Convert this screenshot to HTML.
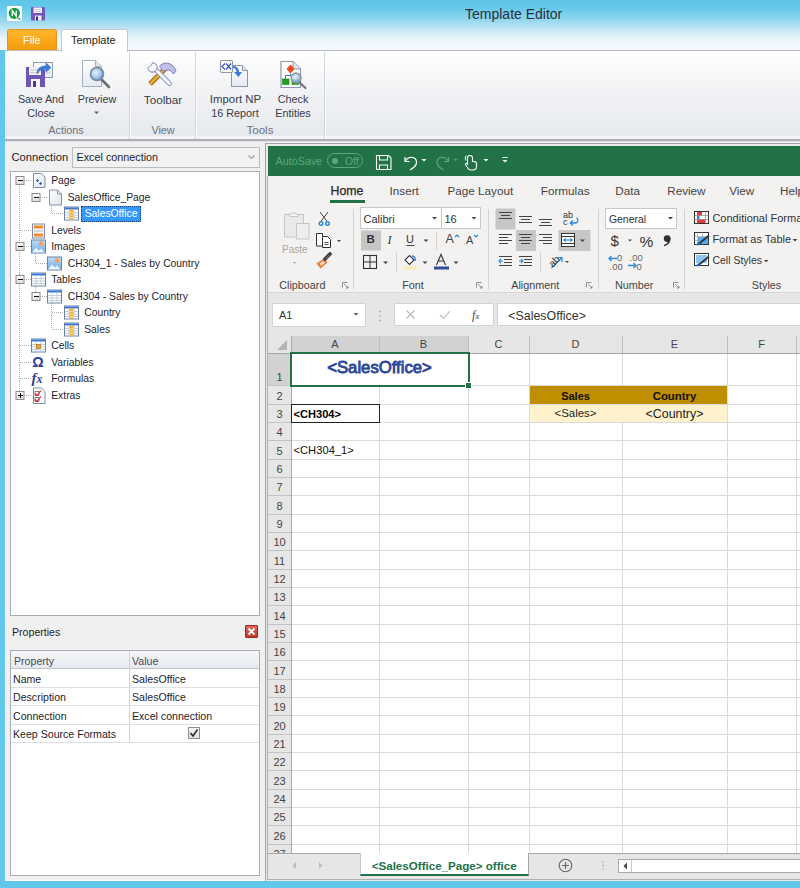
<!DOCTYPE html>
<html><head><meta charset="utf-8">
<style>
*{box-sizing:border-box;margin:0;padding:0}
html,body{width:800px;height:888px;overflow:hidden}
body{position:relative;background:#62c7ea;font-family:"Liberation Sans",sans-serif;color:#222}
.a{position:absolute}
.t{position:absolute;white-space:nowrap;line-height:1}
#title{left:0;top:0;width:800px;height:50px;background:linear-gradient(#5cc6e8 0%,#66c9ea 16%,#8fd5ef 38%,#bce5f4 56%,#dcf0f9 70%,#edf6fb 80%,#f5f9fd 100%)}
#ribbon{left:5px;top:50px;width:795px;height:91px;background:linear-gradient(#ffffff 0%,#f3f4f6 40%,#e6e9ed 97%,#f2f4f8 97%);border-top:1px solid #b9bcc2;border-bottom:2px solid #aeb0b4}
.sep{position:absolute;top:52px;width:1px;height:87px;background:#d2d5db;box-shadow:1px 0 0 #fdfdfe}
.rl{font-size:10.8px;color:#3a3a48;text-align:center}
.gl{font-size:10.8px;color:#6b7080;text-align:center}
#left{left:5px;top:141px;width:795px;height:740px;background:#f0f0f0;border-top:1px solid #e2e2e2;border-left:1px solid #fdfbfb;border-bottom:1px solid #fdfbfb}
#xl{left:265px;top:143px;width:535px;height:738px;background:#f0f0f0;border-left:1px solid #a4a4a4;border-top:1px solid #a4a4a4}
.tree{font-size:11px;color:#1b1b2b}

.ui{font-size:10.6px;color:#1e1e2c}
.tr{font-size:10.35px}
</style></head><body>
<div id="title" class="a"></div>
<div class="t" style="left:465px;top:7px;font-size:14px;color:#2a2f3a">Template Editor</div>

<!-- qlik icon -->
<svg class="a" style="left:0;top:0" width="50" height="25" viewBox="0 0 50 25">
 <rect x="7" y="6" width="15" height="15" rx="1.5" fill="#fff"/>
 <path d="M19 17.5 L21 20 L17.5 19 Z" fill="#0e9a3e"/>
 <circle cx="14.3" cy="13.3" r="5.6" fill="#0e9a3e"/>
 <path d="M12.3 16.2 V10.6 L16.3 16.2 V10.6" fill="none" stroke="#e8f6ec" stroke-width="1.5"/>
 <rect x="31" y="7" width="14" height="13.5" rx="0.8" fill="#7257b8"/>
 <rect x="33.5" y="7.5" width="8.5" height="5.5" fill="#f4f4fa"/>
 <path d="M34.5 9.5 h6.5 M34.5 11.5 h6.5" stroke="#b8b8c8" stroke-width="0.7"/>
 <rect x="35" y="15.5" width="6.5" height="5" fill="#f0eef8"/>
 <rect x="36" y="16.5" width="2" height="4" fill="#3a2a78"/>
</svg>
<!-- tabs -->
<div class="a" style="left:7px;top:29px;width:50px;height:22px;border-radius:3px 3px 0 0;background:linear-gradient(#ffb62c,#fba81a 50%,#f39a0a);border:1px solid #e8951c;border-bottom:none"></div>
<div class="t" style="left:23px;top:35px;font-size:11px;color:#fff">File</div>
<div class="a" style="left:61px;top:29px;width:67px;height:23px;border-radius:3px 3px 0 0;background:#fff;border:1px solid #c6cad0;border-bottom:none;z-index:2"></div>
<div class="t" style="left:71px;top:35px;font-size:11px;color:#222;z-index:3">Template</div>

<div id="ribbon" class="a"></div>
<div class="sep" style="left:129px"></div>
<div class="sep" style="left:195px"></div>
<div class="sep" style="left:324px"></div>

<div class="t rl" style="left:10px;top:94px;width:62px">Save And</div>
<div class="t rl" style="left:10px;top:108px;width:62px">Close</div>
<div class="t rl" style="left:66px;top:94px;width:62px">Preview</div>
<div class="t gl" style="left:35px;top:125px;width:62px">Actions</div>
<svg class="a" style="left:93px;top:111px" width="8" height="4"><path d="M1 0.5 h5 l-2.5 2.5 z" fill="#5a5a66"/></svg>
<div class="t rl" style="left:132px;top:93.6px;width:62px;font-size:11.7px">Toolbar</div>
<div class="t gl" style="left:132px;top:125px;width:62px">View</div>
<div class="t rl" style="left:200.5px;top:93.8px;width:70px;font-size:11.4px">Import NP</div>
<div class="t rl" style="left:200px;top:108px;width:70px">16 Report</div>
<div class="t rl" style="left:262px;top:94px;width:62px">Check</div>
<div class="t rl" style="left:262px;top:108px;width:62px">Entities</div>
<div class="t gl" style="left:229px;top:125px;width:62px;font-size:11.5px">Tools</div>


<!-- ribbon icons -->
<svg class="a" style="left:0;top:0;z-index:5" width="330" height="95" viewBox="0 0 330 95">
 <defs>
  <linearGradient id="docg" x1="0" y1="0" x2="0" y2="1"><stop offset="0" stop-color="#ffffff"/><stop offset="1" stop-color="#e4e9f2"/></linearGradient>
  <radialGradient id="lens" cx="0.4" cy="0.4" r="0.6"><stop offset="0" stop-color="#e8f2fb"/><stop offset="0.6" stop-color="#a9c9ea"/><stop offset="1" stop-color="#6f9bd0"/></radialGradient>
 </defs>
 <!-- save and close -->
 <rect x="33.5" y="62.5" width="19" height="15" fill="url(#docg)" stroke="#8a9bb0"/>
 <line x1="42" y1="70" x2="50" y2="70" stroke="#b8c4d4"/><line x1="42" y1="73" x2="50" y2="73" stroke="#b8c4d4"/>
 <path d="M26 67 h16 l3 3 v17 h-19 z" fill="#6d56b8"/>
 <rect x="29" y="67" width="12" height="8" fill="#f0f0f4"/>
 <line x1="30" y1="70" x2="40" y2="70" stroke="#c8c8d0"/><line x1="30" y1="72.5" x2="40" y2="72.5" stroke="#c8c8d0"/>
 <rect x="31" y="79" width="9" height="8" fill="#f4f4f8"/><rect x="33" y="81" width="3" height="6" fill="#4a3a90"/>
 <path d="M37 74 C37 68 41 66 46 66 V63 L51 67.5 L46 72 V69 C42 69 39 70 37 74 Z" fill="#3b7fd4" stroke="#2a64b8" stroke-width="0.6"/>
 <!-- preview -->
 <path d="M82.5 60.5 h13 l6 6 v20 h-19 z" fill="url(#docg)" stroke="#a4b0c0"/>
 <path d="M95.5 60.5 v6 h6" fill="#e0e6ee" stroke="#a4b0c0"/>
 <line x1="101" y1="79" x2="109" y2="87" stroke="#6a6e76" stroke-width="2.6" stroke-linecap="round"/>
 <circle cx="97" cy="74" r="6.5" fill="url(#lens)" stroke="#7e8894" stroke-width="1.6"/>
 <!-- toolbar (tools) -->
 <path d="M150 84 L165.5 68.5" stroke="#94600a" stroke-width="5" stroke-linecap="butt"/>
 <path d="M150 84 L165.5 68.5" stroke="#e8ac30" stroke-width="3"/>
 <path d="M159.5 66.5 C162 62.5 168 62 172.5 65.5 L176 70.5 L173.5 74 L170.5 70.5 C168 69.5 165.5 70 163.5 71.5 Z" fill="#c4c0ea" stroke="#7d76c6" stroke-width="1"/>
 <path d="M156.5 70.5 L169.5 83.5" stroke="#8898c0" stroke-width="5" stroke-linecap="round"/>
 <path d="M156.5 70.5 L169.5 83.5" stroke="#f6f8fc" stroke-width="3" stroke-linecap="round"/>
 <circle cx="152.5" cy="67.5" r="4.6" fill="#f6f8fc" stroke="#8898c0" stroke-width="1.1"/>
 <path d="M146 63 L150.5 65 L152 67 L149.5 69 L147 67.5 Z M146 63 L153 61 L152.5 64 L150.5 65.5 Z" fill="#f8f9fa"/>
 <path d="M147.8 67.8 L150.3 66.3 L152 64 L152.6 62.2" fill="none" stroke="#8898c0" stroke-width="1"/>
 <!-- import NP -->
 <path d="M231.5 65.5 h11 l5 5 v16 h-16 z" fill="url(#docg)" stroke="#8a96a6"/>
 <path d="M242.5 65.5 v5 h5" fill="#dfe6ee" stroke="#8a96a6"/>
 <rect x="220.5" y="60.5" width="12" height="12" rx="1.5" fill="#fff" stroke="#8d98a6" stroke-width="1.2"/>
 <path d="M225 63.5 L222 66.5 L225 69.5 M226 63.5 L231 69.5 M231 63.5 L226 69.5" fill="none" stroke="#3c5cc0" stroke-width="1.3"/>
 <path d="M233 66 C237 66 239 69 239 72 H242 L238.5 77 L234 72 H236.5 C236.5 70 235 68 233 68 Z" fill="#3f78d8"/>
 <!-- check entities -->
 <path d="M281 61.5 h12 l7.5 7.5 v18.5 h-19.5 z" fill="#fff" stroke="#8a98aa" stroke-width="1.2"/>
 <path d="M293 61.5 v7.5 h7.5" fill="#dde6f0" stroke="#8a98aa"/>
 <path d="M290.5 64.5 L294.5 69 L290.5 73.5 L286.5 69 Z" fill="#ef4a1c"/>
 <path d="M290.5 73.5 V75.5 H285.5 V79 M290.5 75.5 H295" fill="none" stroke="#4a70a8" stroke-width="1"/>
 <rect x="282.5" y="79" width="6.5" height="5.5" fill="#1ea21e" stroke="#138013" stroke-width="0.6"/>
 <rect x="292" y="79" width="6.5" height="5.5" fill="#1ea21e" stroke="#138013" stroke-width="0.6"/>
 <line x1="299" y1="82" x2="305.5" y2="88" stroke="#70747c" stroke-width="2.2" stroke-linecap="round"/>
 <circle cx="296" cy="78" r="5" fill="url(#lens)" stroke="#8a929c" stroke-width="1.3" fill-opacity="0.85"/>
</svg>

<div id="left" class="a"></div>
<div class="t ui" style="left:11.5px;top:151.5px;font-size:11.2px">Connection</div>
<div class="a" style="left:72px;top:147px;width:188px;height:21px;background:#f2f2f2;border:1px solid #bcbcbc"></div>
<div class="t ui" style="left:76.5px;top:151.5px;font-size:10.8px">Excel connection</div>
<svg class="a" style="left:247px;top:154px" width="10" height="8"><path d="M1.5 1.5 L4.5 4.5 L7.5 1.5" fill="none" stroke="#a0a0a0" stroke-width="1.2"/></svg>
<div class="a" style="left:10px;top:171px;width:250px;height:445px;background:#fff;border:1px solid #a9acb2"></div>
<svg class="a" style="left:0;top:0" width="265" height="420" viewBox="0 0 265 420">
<defs><linearGradient id="expg" x1="0" y1="0" x2="0" y2="1"><stop offset="0" stop-color="#fff"/><stop offset="1" stop-color="#dcdcdc"/></linearGradient>
<linearGradient id="imgbg" x1="0" y1="0" x2="0" y2="1"><stop offset="0" stop-color="#bfe0fa"/><stop offset="1" stop-color="#6fa6e0"/></linearGradient>
<linearGradient id="pageg" x1="0" y1="0" x2="1" y2="1"><stop offset="0" stop-color="#fff"/><stop offset="1" stop-color="#dfe6ef"/></linearGradient></defs>
<line x1="19.5" y1="184" x2="19.5" y2="391" stroke="#acacac" stroke-dasharray="1 1"/>
<line x1="24" y1="180.5" x2="31" y2="180.5" stroke="#acacac" stroke-dasharray="1 1"/>
<line x1="20" y1="230.5" x2="31" y2="230.5" stroke="#acacac" stroke-dasharray="1 1"/>
<line x1="24" y1="246.5" x2="31" y2="246.5" stroke="#acacac" stroke-dasharray="1 1"/>
<line x1="24" y1="279.5" x2="31" y2="279.5" stroke="#acacac" stroke-dasharray="1 1"/>
<line x1="20" y1="345.5" x2="31" y2="345.5" stroke="#acacac" stroke-dasharray="1 1"/>
<line x1="20" y1="362.5" x2="31" y2="362.5" stroke="#acacac" stroke-dasharray="1 1"/>
<line x1="20" y1="378.5" x2="31" y2="378.5" stroke="#acacac" stroke-dasharray="1 1"/>
<line x1="24" y1="395.5" x2="31" y2="395.5" stroke="#acacac" stroke-dasharray="1 1"/>
<line x1="35.5" y1="194" x2="35.5" y2="193" stroke="#acacac" stroke-dasharray="1 1"/>
<line x1="35.5" y1="250" x2="35.5" y2="263" stroke="#acacac" stroke-dasharray="1 1"/>
<line x1="36" y1="263.5" x2="47" y2="263.5" stroke="#acacac" stroke-dasharray="1 1"/>
<line x1="35.5" y1="283" x2="35.5" y2="292" stroke="#acacac" stroke-dasharray="1 1"/>
<line x1="40" y1="197.5" x2="47" y2="197.5" stroke="#acacac" stroke-dasharray="1 1"/>
<line x1="40" y1="296.5" x2="47" y2="296.5" stroke="#acacac" stroke-dasharray="1 1"/>
<line x1="51.5" y1="204" x2="51.5" y2="213" stroke="#acacac" stroke-dasharray="1 1"/>
<line x1="52" y1="213.5" x2="63" y2="213.5" stroke="#acacac" stroke-dasharray="1 1"/>
<line x1="51.5" y1="303" x2="51.5" y2="329" stroke="#acacac" stroke-dasharray="1 1"/>
<line x1="52" y1="312.5" x2="63" y2="312.5" stroke="#acacac" stroke-dasharray="1 1"/>
<line x1="52" y1="329.5" x2="63" y2="329.5" stroke="#acacac" stroke-dasharray="1 1"/>
<rect x="16.0" y="176.5" width="8" height="8" fill="url(#expg)" stroke="#8c8c8c"/>
<line x1="18" y1="180.5" x2="23" y2="180.5" stroke="#111" stroke-width="1"/>
<path d="M33.5 173.5 h8 l3.5 3.5 v10.5 h-11.5 z" fill="url(#pageg)" stroke="#7d8ea6"/>
<path d="M36 180.5 h3 M37.5 179.0 v3 M39 183.5 h3 M40.5 182.0 v3" stroke="#3f5fb8" stroke-width="1.2"/>
<rect x="32.0" y="193.5" width="8" height="8" fill="url(#expg)" stroke="#8c8c8c"/>
<line x1="34" y1="197.5" x2="39" y2="197.5" stroke="#111" stroke-width="1"/>
<path d="M49.5 190.0 h8 l4 4 v11 h-12 z" fill="url(#pageg)" stroke="#8596ad"/>
<path d="M57.5 190.0 v4 h4" fill="none" stroke="#8596ad"/>
<rect x="64.5" y="207.0" width="14" height="13" fill="#fff" stroke="#6b82a8"/>
<rect x="65" y="207.5" width="13" height="2" fill="#3d78d8"/>
<line x1="65" y1="212.5" x2="78" y2="212.5" stroke="#c4cedc"/>
<line x1="65" y1="215.0" x2="78" y2="215.0" stroke="#c4cedc"/>
<line x1="65" y1="217.5" x2="78" y2="217.5" stroke="#c4cedc"/>
<line x1="69" y1="209.5" x2="69" y2="219.5" stroke="#c4cedc"/><line x1="74" y1="209.5" x2="74" y2="219.5" stroke="#c4cedc"/>
<rect x="69.5" y="209.5" width="4" height="10" fill="#f3b338"/>
<line x1="69.5" y1="212.5" x2="73.5" y2="212.5" stroke="#f9d98c"/>
<line x1="69.5" y1="215.0" x2="73.5" y2="215.0" stroke="#f9d98c"/>
<line x1="69.5" y1="217.5" x2="73.5" y2="217.5" stroke="#f9d98c"/>
<rect x="32.5" y="224.0" width="12" height="14" fill="#f4f6fa" stroke="#7d8ea6"/>
<rect x="34" y="225.5" width="9" height="3" fill="#f08a2a"/><rect x="34" y="233.5" width="9" height="3" fill="#f08a2a"/>
<line x1="34" y1="231.0" x2="43" y2="231.0" stroke="#a8b8d0"/>
<rect x="16.0" y="242.5" width="8" height="8" fill="url(#expg)" stroke="#8c8c8c"/>
<line x1="18" y1="246.5" x2="23" y2="246.5" stroke="#111" stroke-width="1"/>
<rect x="31.5" y="240.0" width="14" height="13" fill="url(#imgbg)" stroke="#6b82a8"/>
<circle cx="41" cy="243.5" r="2.2" fill="#f79a5a"/>
<path d="M32 252.5 L36 247.5 L39 250.5 L41 248.5 L45 252.5 z" fill="#eef4fc"/>
<rect x="47.5" y="257.0" width="14" height="13" fill="url(#imgbg)" stroke="#6b82a8"/>
<circle cx="57" cy="260.5" r="2.2" fill="#f79a5a"/>
<path d="M48 269.5 L52 264.5 L55 267.5 L57 265.5 L61 269.5 z" fill="#eef4fc"/>
<rect x="16.0" y="275.5" width="8" height="8" fill="url(#expg)" stroke="#8c8c8c"/>
<line x1="18" y1="279.5" x2="23" y2="279.5" stroke="#111" stroke-width="1"/>
<rect x="31.5" y="273.0" width="14" height="13" fill="#fff" stroke="#6b82a8"/>
<rect x="32" y="273.5" width="13" height="2" fill="#3d78d8"/>
<line x1="32" y1="278.5" x2="45" y2="278.5" stroke="#c4cedc"/>
<line x1="32" y1="281.0" x2="45" y2="281.0" stroke="#c4cedc"/>
<line x1="32" y1="283.5" x2="45" y2="283.5" stroke="#c4cedc"/>
<line x1="36" y1="275.5" x2="36" y2="285.5" stroke="#c4cedc"/><line x1="41" y1="275.5" x2="41" y2="285.5" stroke="#c4cedc"/>
<rect x="32.0" y="292.5" width="8" height="8" fill="url(#expg)" stroke="#8c8c8c"/>
<line x1="34" y1="296.5" x2="39" y2="296.5" stroke="#111" stroke-width="1"/>
<rect x="47.5" y="290.0" width="14" height="13" fill="#fff" stroke="#6b82a8"/>
<rect x="48" y="290.5" width="13" height="2" fill="#3d78d8"/>
<line x1="48" y1="295.5" x2="61" y2="295.5" stroke="#c4cedc"/>
<line x1="48" y1="298.0" x2="61" y2="298.0" stroke="#c4cedc"/>
<line x1="48" y1="300.5" x2="61" y2="300.5" stroke="#c4cedc"/>
<line x1="52" y1="292.5" x2="52" y2="302.5" stroke="#c4cedc"/><line x1="57" y1="292.5" x2="57" y2="302.5" stroke="#c4cedc"/>
<rect x="64.5" y="306.0" width="14" height="13" fill="#fff" stroke="#6b82a8"/>
<rect x="65" y="306.5" width="13" height="2" fill="#3d78d8"/>
<line x1="65" y1="311.5" x2="78" y2="311.5" stroke="#c4cedc"/>
<line x1="65" y1="314.0" x2="78" y2="314.0" stroke="#c4cedc"/>
<line x1="65" y1="316.5" x2="78" y2="316.5" stroke="#c4cedc"/>
<line x1="69" y1="308.5" x2="69" y2="318.5" stroke="#c4cedc"/><line x1="74" y1="308.5" x2="74" y2="318.5" stroke="#c4cedc"/>
<rect x="69.5" y="308.5" width="4" height="10" fill="#f3b338"/>
<line x1="69.5" y1="311.5" x2="73.5" y2="311.5" stroke="#f9d98c"/>
<line x1="69.5" y1="314.0" x2="73.5" y2="314.0" stroke="#f9d98c"/>
<line x1="69.5" y1="316.5" x2="73.5" y2="316.5" stroke="#f9d98c"/>
<rect x="64.5" y="323.0" width="14" height="13" fill="#fff" stroke="#6b82a8"/>
<rect x="65" y="323.5" width="13" height="2" fill="#3d78d8"/>
<line x1="65" y1="328.5" x2="78" y2="328.5" stroke="#c4cedc"/>
<line x1="65" y1="331.0" x2="78" y2="331.0" stroke="#c4cedc"/>
<line x1="65" y1="333.5" x2="78" y2="333.5" stroke="#c4cedc"/>
<line x1="69" y1="325.5" x2="69" y2="335.5" stroke="#c4cedc"/><line x1="74" y1="325.5" x2="74" y2="335.5" stroke="#c4cedc"/>
<rect x="69.5" y="325.5" width="4" height="10" fill="#f3b338"/>
<line x1="69.5" y1="328.5" x2="73.5" y2="328.5" stroke="#f9d98c"/>
<line x1="69.5" y1="331.0" x2="73.5" y2="331.0" stroke="#f9d98c"/>
<line x1="69.5" y1="333.5" x2="73.5" y2="333.5" stroke="#f9d98c"/>
<rect x="31.5" y="339.0" width="14" height="13" fill="#fff" stroke="#6b82a8"/>
<rect x="32" y="339.5" width="13" height="2" fill="#3d78d8"/>
<line x1="32" y1="344.5" x2="45" y2="344.5" stroke="#c4cedc"/>
<line x1="32" y1="347.0" x2="45" y2="347.0" stroke="#c4cedc"/>
<line x1="32" y1="349.5" x2="45" y2="349.5" stroke="#c4cedc"/>
<line x1="36" y1="341.5" x2="36" y2="351.5" stroke="#c4cedc"/><line x1="41" y1="341.5" x2="41" y2="351.5" stroke="#c4cedc"/>
<rect x="36.5" y="344.5" width="4" height="4" fill="#f1a51c" stroke="#9a6a10" stroke-width="0.6"/>
<rect x="16.0" y="391.5" width="8" height="8" fill="url(#expg)" stroke="#8c8c8c"/>
<line x1="18" y1="395.5" x2="23" y2="395.5" stroke="#111" stroke-width="1"/>
<line x1="20.5" y1="393.0" x2="20.5" y2="398.0" stroke="#111" stroke-width="1"/>
<path d="M33.5 388.0 h8 l3.5 3.5 v12 h-11.5 z" fill="#fff" stroke="#7d8ea6"/>
<rect x="35" y="391.5" width="4" height="4" fill="none" stroke="#555" stroke-width="0.7"/><rect x="35" y="397.5" width="4" height="4" fill="none" stroke="#555" stroke-width="0.7"/>
<path d="M35 393.5 l2 2 l4 -5 M35 399.5 l2 2 l4 -5" fill="none" stroke="#e02020" stroke-width="1.2"/>
</svg>
<div class="t ui tr" style="left:51.2px;top:175.5px">Page</div>
<div class="t ui tr" style="left:67.7px;top:192.5px">SalesOffice_Page</div>
<div class="a" style="left:81px;top:206.0px;width:60px;height:16px;background:#3399ff;border:1px dotted #1a3f7a"></div>
<div class="t ui tr" style="left:84.7px;top:208.5px;color:#fff">SalesOffice</div>
<div class="t ui tr" style="left:51.2px;top:225.5px">Levels</div>
<div class="t ui tr" style="left:51.2px;top:241.5px">Images</div>
<div class="t ui tr" style="left:67.7px;top:258.5px">CH304_1 - Sales by Country</div>
<div class="t ui tr" style="left:51.2px;top:274.5px">Tables</div>
<div class="t ui tr" style="left:67.7px;top:291.5px">CH304 - Sales by Country</div>
<div class="t ui tr" style="left:84.2px;top:307.5px">Country</div>
<div class="t ui tr" style="left:84.2px;top:324.5px">Sales</div>
<div class="t ui tr" style="left:51.2px;top:340.5px">Cells</div>
<div class="t" style="left:32.3px;top:355.2px;font-size:14.2px;font-weight:bold;color:#2a3f9e">&#937;</div>
<div class="t ui tr" style="left:51.2px;top:357.5px">Variables</div>
<div class="t" style="left:31.5px;top:370.5px;font-size:15px;font-weight:bold;font-style:italic;font-family:'Liberation Serif',serif;color:#2a3f9e">f<span style="font-size:12px">x</span></div>
<div class="t ui tr" style="left:51.2px;top:373.5px">Formulas</div>
<div class="t ui tr" style="left:51.2px;top:390.5px">Extras</div>
<div class="t ui" style="left:12px;top:627px">Properties</div>
<div class="a" style="left:245px;top:625px;width:13px;height:13px;background:linear-gradient(#e26a5a,#c0392b);border:1px solid #9a2a20;border-radius:1px"></div>
<svg class="a" style="left:245px;top:625px" width="13" height="13"><path d="M3.5 3.5 L9.5 9.5 M9.5 3.5 L3.5 9.5" stroke="#fff" stroke-width="1.8"/></svg>
<div class="a" style="left:10px;top:650px;width:250px;height:226px;background:#fff;border:1px solid #a9acb2"></div>
<div class="a" style="left:11px;top:651px;width:248px;height:18px;background:linear-gradient(#f5f6f8,#e6e9ee);border-bottom:1px solid #c0c4ca"></div>
<div class="a" style="left:129px;top:651px;width:1px;height:92px;background:#d0d4da"></div>
<div class="a" style="left:11px;top:687px;width:248px;height:1px;background:#dcdfe4"></div>
<div class="a" style="left:11px;top:705px;width:248px;height:1px;background:#dcdfe4"></div>
<div class="a" style="left:11px;top:724px;width:248px;height:1px;background:#dcdfe4"></div>
<div class="a" style="left:11px;top:742px;width:248px;height:1px;background:#dcdfe4"></div>
<div class="t ui" style="left:14px;top:656px;color:#4a4a5a">Property</div>
<div class="t ui" style="left:132px;top:656px;color:#4a4a5a">Value</div>
<div class="t ui" style="left:13px;top:674.0px">Name</div>
<div class="t ui" style="left:132px;top:674.0px">SalesOffice</div>
<div class="t ui" style="left:13px;top:692.3px">Description</div>
<div class="t ui" style="left:132px;top:692.3px">SalesOffice</div>
<div class="t ui" style="left:13px;top:710.6px">Connection</div>
<div class="t ui" style="left:132px;top:710.6px">Excel connection</div>
<div class="t ui" style="left:13px;top:728.9px">Keep Source Formats</div>
<div class="a" style="left:188px;top:727px;width:12px;height:12px;background:linear-gradient(#f4f4f4,#dedede);border:1px solid #8e8f8f"></div>
<svg class="a" style="left:188px;top:727px" width="12" height="12"><path d="M2.5 6 L5 9 L9.5 2.5" fill="none" stroke="#222" stroke-width="1.4"/></svg><div class="a" style="left:265px;top:143px;width:535px;height:738px;background:#e9e9e9;border-left:1px solid #a4a4a4;border-top:1px solid #a4a4a4"></div>
<div class="a" style="left:267px;top:176px;width:1px;height:704px;background:#b0b0b0"></div>
<div class="a" style="left:268px;top:146px;width:532px;height:30px;background:#217346"></div>
<div class="t" style="left:275.5px;top:156px;font-size:10.8px;color:#5ea67b">AutoSave</div>
<div class="a" style="left:327px;top:153px;width:36px;height:15px;border:1px solid #5ea67b;border-radius:8px"></div>
<div class="a" style="left:332px;top:157.5px;width:6px;height:6px;border-radius:50%;background:#5ea67b"></div>
<div class="t" style="left:345px;top:156px;font-size:10.5px;color:#5ea67b">Off</div>
<svg class="a" style="left:268px;top:146px" width="260" height="30" viewBox="268 146 260 30">
 <path d="M376.5 155.5 h12 l2.5 2.5 v11.5 h-14.5 z" fill="none" stroke="#fff" stroke-width="1.1"/>
 <path d="M379.5 155.5 v4.5 h8 v-4.5" fill="none" stroke="#fff" stroke-width="1.1"/>
 <path d="M379.5 169.5 v-4.5 h8 v4.5" fill="none" stroke="#fff" stroke-width="1.1"/>
 <path d="M405 157 v4.5 h4.5" fill="none" stroke="#fff" stroke-width="1.2"/>
 <path d="M405.5 161 C408 156 416 156 416.5 162 C417 166 413 168 410 170" fill="none" stroke="#fff" stroke-width="1.2"/>
 <path d="M421.5 159 h5 l-2.5 2.5 z" fill="#fff"/>
 <path d="M448.5 157 v4.5 h-4.5" fill="none" stroke="#5ea67b" stroke-width="1.2"/>
 <path d="M448 161 C445.5 156 437.5 156 437 162 C436.5 166 440.5 168 443.5 170" fill="none" stroke="#5ea67b" stroke-width="1.2"/>
 <path d="M453.5 159 h4 l-2 2 z" fill="#5ea67b"/>
 <path d="M467.5 164 v-6 a2.5 2.5 0 0 1 5 0 v3.5 h1.5 a2.5 2.5 0 0 1 2.5 2.5 v2.5 c0 2 -1.5 3.5 -3.5 3.5 h-2 c-1.5 0 -2.5 -0.8 -3.2 -2 l-2.3 -3.2 c-0.6 -0.9 0.6 -2 1.5 -1.2 z" fill="none" stroke="#fff" stroke-width="1.1"/>
 <path d="M466 160.5 a5 5 0 0 1 0 -5" fill="none" stroke="#fff" stroke-width="1"/>
 <path d="M483.5 159 h5 l-2.5 2.5 z" fill="#fff"/>
 <rect x="502.5" y="157" width="5" height="1" fill="#fff"/>
 <path d="M502.5 160 h5 l-2.5 2.5 z" fill="#fff"/>
</svg>
<div class="a" style="left:268px;top:176px;width:532px;height:117px;background:#f3f2f1;border-bottom:1px solid #d6d6d6"></div>
<div class="t" style="left:330.5px;top:185px;font-size:12.3px;color:#262626;-webkit-text-stroke:0.25px #262626">Home</div>
<div class="t" style="left:389.6px;top:185px;font-size:11.7px;color:#444">Insert</div>
<div class="t" style="left:447.5px;top:185px;font-size:11.7px;color:#444">Page Layout</div>
<div class="t" style="left:540.8px;top:185px;font-size:11.7px;color:#444">Formulas</div>
<div class="t" style="left:615.2px;top:185px;font-size:11.7px;color:#444">Data</div>
<div class="t" style="left:667.2px;top:185px;font-size:11.7px;color:#444">Review</div>
<div class="t" style="left:729.2px;top:185px;font-size:11.7px;color:#444">View</div>
<div class="t" style="left:780px;top:185px;font-size:11.7px;color:#444">Help</div>
<div class="a" style="left:330px;top:200px;width:35px;height:3px;background:#217346"></div>
<div class="t" style="left:279.25px;top:280px;font-size:10.8px;color:#444">Clipboard</div>
<div class="t" style="left:402.2px;top:280px;font-size:10.8px;color:#444">Font</div>
<div class="t" style="left:511.25px;top:280px;font-size:10.8px;color:#444">Alignment</div>
<div class="t" style="left:615px;top:280px;font-size:10.8px;color:#444">Number</div>
<div class="t" style="left:751.8px;top:280px;font-size:10.8px;color:#444">Styles</div>
<div class="a" style="left:352.5px;top:209px;width:1px;height:80px;background:#d2d2d2"></div>
<div class="a" style="left:487.5px;top:209px;width:1px;height:80px;background:#d2d2d2"></div>
<div class="a" style="left:597.5px;top:209px;width:1px;height:80px;background:#d2d2d2"></div>
<div class="a" style="left:684px;top:209px;width:1px;height:80px;background:#d2d2d2"></div>
<svg class="a" style="left:268px;top:203px" width="532" height="90" viewBox="268 203 532 90">
 <!-- paste -->
 <path d="M284.5 214.5 h19 v22.5 h-19 z" fill="#e9e9e9" stroke="#c6c6c6"/>
 <path d="M289.5 216.5 v-2.5 h3 a1.5 1.5 0 0 1 3 0 h3 v2.5 z" fill="#f3f3f3" stroke="#c6c6c6"/>
 <rect x="296.5" y="223.5" width="12.5" height="15.5" fill="#efefef" stroke="#c6c6c6"/>
 <path d="M292.5 262 h4 l-2 2 z" fill="#b4b4b4"/>
 <!-- scissors -->
 <path d="M320 212 L327.5 222 M328 212 L320.5 222" stroke="#444" stroke-width="1"/>
 <circle cx="321" cy="223.5" r="1.8" fill="none" stroke="#2b8ce0" stroke-width="1.4"/>
 <circle cx="327.5" cy="223.5" r="1.8" fill="none" stroke="#2b8ce0" stroke-width="1.4"/>
 <!-- copy -->
 <path d="M316.5 233.5 h6 v12.5 h-6 z" fill="#fff" stroke="#333"/>
 <path d="M322.5 236.5 h5 l3 3 v8 h-8 z" fill="#fff" stroke="#333"/>
 <line x1="324.5" y1="242.5" x2="328.5" y2="242.5" stroke="#555"/><line x1="324.5" y1="244.5" x2="328.5" y2="244.5" stroke="#555"/>
 <path d="M337 240 h4 l-2 2 z" fill="#444"/>
 <!-- painter -->
 <path d="M316.5 263.5 L324 258.5 L327.5 262.5 L320.5 268.5 Z" fill="#ed7d31"/>
 <path d="M319.5 263.5 L323.5 261 L325 262.8 L321.2 265.8 Z" fill="#fde3cf"/>
 <path d="M325 259 L330 254" stroke="#3a3a3a" stroke-width="3.6" stroke-linecap="round"/>
 <path d="M326 258.5 L329.5 255" stroke="#8a8a8a" stroke-width="1" stroke-linecap="round"/>
 <!-- launchers -->
 <g fill="none" stroke="#777" stroke-width="0.8">
  <path d="M342.5 287.5 v-5 h5 M344 284 l4 4 M348 286 v2 h-2"/>
  <path d="M476.5 287.5 v-5 h5 M478 284 l4 4 M482 286 v2 h-2"/>
  <path d="M586.5 287.5 v-5 h5 M588 284 l4 4 M592 286 v2 h-2"/>
  <path d="M673.5 287.5 v-5 h5 M675 284 l4 4 M679 286 v2 h-2"/>
 </g>
 <!-- font boxes -->
 <rect x="360.5" y="207.5" width="81" height="21" fill="#fff" stroke="#c8c8c8"/>
 <rect x="441.5" y="207.5" width="39" height="21" fill="#fff" stroke="#c8c8c8"/>
 <path d="M432 217 h5 l-2.5 2.5 z" fill="#444"/>
 <path d="M471.5 217 h5 l-2.5 2.5 z" fill="#444"/>
 <rect x="361" y="230.5" width="20" height="20" fill="#c6c6c6"/>
 <path d="M406.5 245.5 h8" stroke="#444"/>
 <path d="M423.5 239.5 h5 l-2.5 2.5 z" fill="#444"/>
 <line x1="436.5" y1="232" x2="436.5" y2="250" stroke="#d0d0d0"/>
 <path d="M455 237 l2 -2 l2 2" fill="none" stroke="#2b8ce0" stroke-width="1.2"/>
 <path d="M474 235 l2 2 l2 -2" fill="none" stroke="#2b8ce0" stroke-width="1.2"/>
 <!-- borders -->
 <rect x="363.5" y="255.5" width="13" height="13" fill="none" stroke="#333" stroke-width="1.1"/>
 <line x1="370" y1="255.5" x2="370" y2="268.5" stroke="#333" stroke-width="1"/>
 <line x1="363.5" y1="262" x2="376.5" y2="262" stroke="#333" stroke-width="1"/>
 <path d="M383 261.5 h5 l-2.5 2.5 z" fill="#444"/>
 <line x1="396.5" y1="253" x2="396.5" y2="272" stroke="#d0d0d0"/>
 <!-- fill -->
 <path d="M405 260 L409.5 255.5 L414 260 L409.5 264.5 Z" fill="#fff" stroke="#333" stroke-width="1.1"/>
 <path d="M412 256 C414.5 256 415.5 258 415 261" fill="none" stroke="#2b7bd0" stroke-width="1.4"/>
 <rect x="403" y="266.5" width="14" height="3" fill="#faeab8"/>
 <path d="M422.5 261.5 h5 l-2.5 2.5 z" fill="#444"/>
 <!-- font color -->
 <path d="M436.5 265 L441 254.5 L445.5 265 M438.3 261 h5.4" fill="none" stroke="#333" stroke-width="1.1"/>
 <rect x="434" y="266.5" width="15" height="3" fill="#2f4f9e"/>
 <path d="M453.5 261.5 h5 l-2.5 2.5 z" fill="#444"/>
 <!-- alignment -->
 <rect x="495.5" y="208.5" width="20" height="21" fill="#c6c6c6"/>
 <rect x="516" y="230" width="20" height="21" fill="#c6c6c6"/>
 <rect x="558.5" y="230" width="32" height="21" fill="#c6c6c6"/>
 <g stroke="#444" stroke-width="1.2">
  <path d="M499 212.5 h13 M501 215.5 h9 M499 218.5 h13"/>
  <path d="M519 216.5 h13 M521 219.5 h9 M519 222.5 h13"/>
  <path d="M539 219.5 h13 M541 222.5 h9 M539 225.5 h13"/>
  <path d="M499 234.5 h13 M499 237.5 h9 M499 240.5 h13 M499 243.5 h9"/>
  <path d="M519 234.5 h13 M521 237.5 h9 M519 240.5 h13 M521 243.5 h9"/>
  <path d="M539 234.5 h13 M543 237.5 h9 M539 240.5 h13 M543 243.5 h9"/>
  <path d="M499 256.5 h13 M504 259.5 h8 M504 262.5 h8 M499 265.5 h13"/>
  <path d="M519 256.5 h13 M524 259.5 h8 M524 262.5 h8 M519 265.5 h13"/>
 </g>
 <path d="M503 261 h-4 M501 259 l-2 2 l2 2" fill="none" stroke="#2b8ce0" stroke-width="1.2"/>
 <path d="M519 261 h4 M521 259 l2 2 l-2 2" fill="none" stroke="#2b8ce0" stroke-width="1.2"/>
 <line x1="540.5" y1="253" x2="540.5" y2="272" stroke="#d0d0d0"/>
 <!-- merge -->
 <rect x="561.5" y="233.5" width="13" height="13" fill="#fff" stroke="#333"/>
 <line x1="561.5" y1="236.5" x2="574.5" y2="236.5" stroke="#333"/><line x1="561.5" y1="243.5" x2="574.5" y2="243.5" stroke="#333"/>
 <path d="M564 240 h8 M566 238.5 l-2 1.5 l2 1.5 M570 238.5 l2 1.5 l-2 1.5" fill="none" stroke="#2b8ce0" stroke-width="1.1"/>
 <path d="M580 239.5 h5 l-2.5 2.5 z" fill="#444"/>
 <!-- orientation -->
 <path d="M551.5 268 L561.5 258 M557.5 257.5 h4.5 v4.5" fill="none" stroke="#2b8ce0" stroke-width="1.2"/>
 <path d="M565 261 h4 l-2 2 z" fill="#444"/>
 <!-- number -->
 <rect x="605.5" y="208.5" width="71" height="20" fill="#fff" stroke="#c8c8c8"/>
 <path d="M668 217 h5 l-2.5 2.5 z" fill="#444"/>
 <path d="M628 239.5 h4 l-2 2 z" fill="#444"/>
 <path d="M617 258.5 h-8 M611.5 256 l-2.5 2.5 l2.5 2.5 M628 265.5 h8 M633.5 263 l2.5 2.5 l-2.5 2.5" fill="none" stroke="#2b8ce0" stroke-width="1.3"/>
 <!-- styles icons -->
 <rect x="694.5" y="211.5" width="14" height="12" fill="#fff" stroke="#333"/>
 <rect x="697" y="212" width="5" height="3.5" fill="#e8383c"/><rect x="697" y="219.5" width="8" height="3.5" fill="#e8383c"/><rect x="697" y="216" width="2.5" height="3" fill="#2b8ce0"/>
 <path d="M697.5 211.5 v12 M705.5 211.5 v12 M694.5 215.5 h14 M694.5 219.5 h14" stroke="#777" stroke-width="0.6"/>
 <rect x="694.5" y="232.5" width="14" height="12" fill="#fff" stroke="#333"/>
 <path d="M697.5 232.5 v12 M702.5 232.5 v12 M694.5 236.5 h14 M694.5 240.5 h14" stroke="#999" stroke-width="0.6"/>
 <rect x="698" y="237" width="10" height="7" fill="#5aa6ea"/>
 <path d="M698 244.5 L709 235.5" stroke="#333" stroke-width="1.8"/>
 <path d="M696 245 C697 243 698 242 699.5 242.5 L700 244 C699 245.5 697.5 245.5 696 245 Z" fill="#1e6fc8"/>
 <path d="M792.5 239 h5 l-2.5 2.5 z" fill="#444"/>
 <rect x="694.5" y="253.5" width="14" height="12" fill="#fff" stroke="#333"/>
 <rect x="696" y="255" width="11" height="8" fill="#8fc3f2"/>
 <path d="M698 265.5 L709 256.5" stroke="#333" stroke-width="1.8"/>
 <path d="M696 266 C697 264 698 263 699.5 263.5 L700 265 C699 266.5 697.5 266.5 696 266 Z" fill="#1e6fc8"/>
 <path d="M764 260 h4.5 l-2.25 2.25 z" fill="#444"/>
</svg>
<div class="t" style="left:282px;top:244.5px;font-size:10px;color:#a6a6a6">Paste</div>
<div class="t" style="left:363.5px;top:213.7px;font-size:11px;color:#333">Calibri</div>
<div class="t" style="left:444.5px;top:213.7px;font-size:11px;color:#333">16</div>
<div class="t" style="left:366.5px;top:234px;font-size:11.5px;font-weight:bold;color:#333">B</div>
<div class="t" style="left:387.5px;top:234px;font-size:12px;font-style:italic;font-family:'Liberation Serif',serif;color:#333">I</div>
<div class="t" style="left:406px;top:234px;font-size:11px;color:#333">U</div>
<div class="t" style="left:445.5px;top:233px;font-size:12.5px;color:#444">A</div>
<div class="t" style="left:466px;top:235px;font-size:11px;color:#444">A</div>
<div class="t" style="left:563px;top:211.5px;font-size:9px;color:#333;line-height:0.8">ab<br>c</div>
<svg class="a" style="left:568px;top:217px" width="12" height="10"><path d="M8.5 0.5 C10.5 2 10.5 6 7 6 H2.5 M5 3.5 L2.2 6 L5 8.5" fill="none" stroke="#2b8ce0" stroke-width="1.3"/></svg>
<div class="t" style="left:547px;top:262px;font-size:10px;color:#333;transform:rotate(-45deg);transform-origin:0 0">ab</div>
<div class="t" style="left:609px;top:214.5px;font-size:10.4px;color:#333">General</div>
<div class="t" style="left:610.5px;top:233px;font-size:15px;color:#333">$</div>
<div class="t" style="left:639.5px;top:234px;font-size:15.5px;color:#333">%</div>
<svg class="a" style="left:660px;top:232px" width="16" height="18"><circle cx="7.2" cy="6.6" r="3.4" fill="#333"/><path d="M10.4 6.2 C10.8 10 8.5 13 4.2 14.2 L3.8 13 C6.5 12 8 10.5 8 8.5 Z" fill="#333"/></svg>
<div class="t" style="left:617px;top:253px;font-size:9.5px;color:#666">0</div>
<div class="t" style="left:609.5px;top:262px;font-size:9.5px;color:#666">.00</div>
<div class="t" style="left:629.5px;top:253px;font-size:9.5px;color:#666">.00</div>
<div class="t" style="left:636.5px;top:262px;font-size:9.5px;color:#666">0</div>
<div class="t" style="left:712.4px;top:213px;font-size:11px;color:#333">Conditional Formatting</div>
<div class="t" style="left:712.4px;top:234.3px;font-size:11px;color:#333">Format as Table</div>
<div class="t" style="left:712.4px;top:255.3px;font-size:10.5px;color:#333">Cell Styles</div>
<div class="a" style="left:268px;top:294px;width:532px;height:42px;background:#e6e6e6"></div>
<div class="a" style="left:272px;top:303px;width:94px;height:24px;background:#fff;border:1px solid #d4d4d4"></div>
<div class="t" style="left:279px;top:310px;font-size:11px;color:#333">A1</div>
<div class="a" style="left:394px;top:303px;width:100px;height:23px;background:#fff;border:1px solid #d4d4d4"></div>
<div class="a" style="left:497px;top:303px;width:310px;height:23px;background:#fff;border:1px solid #d4d4d4"></div>
<div class="t" style="left:508.3px;top:309.5px;font-size:12.4px;color:#333">&lt;SalesOffice&gt;</div>
<svg class="a" style="left:268px;top:294px" width="240" height="42" viewBox="268 294 240 42">
 <path d="M353.5 313 h5 l-2.5 2.5 z" fill="#555"/>
 <circle cx="380" cy="311.5" r="0.8" fill="#999"/><circle cx="380" cy="316" r="0.8" fill="#999"/><circle cx="380" cy="320.5" r="0.8" fill="#999"/>
 <path d="M406.5 310.5 L414.5 318.5 M414.5 310.5 L406.5 318.5" stroke="#b8b8b8" stroke-width="1.1"/>
 <path d="M440 315 L443.5 318.5 L450 311" fill="none" stroke="#b8b8b8" stroke-width="1.1"/>
</svg>
<div class="t" style="left:472px;top:309px;font-size:12px;font-style:italic;font-family:'Liberation Serif',serif;color:#444">f<span style="font-size:9px">x</span></div>
<svg class="a" style="left:268px;top:336px" width="532" height="518" viewBox="268 336 532 518">
<rect x="268" y="336" width="532" height="518" fill="#fff"/>
<rect x="268" y="336" width="532" height="17" fill="#e6e6e6"/>
<rect x="268" y="352" width="23" height="502" fill="#e6e6e6"/>
<rect x="291" y="336" width="177" height="17" fill="#d2d2d2"/>
<rect x="268" y="354" width="23" height="31" fill="#d2d2d2"/>
<path d="M287 340 v10 h-10 z" fill="#b4b4b4"/>
<rect x="529" y="385" width="198" height="19" fill="#bf8f00"/>
<rect x="529" y="404" width="198" height="18" fill="#fff2cc"/>
<line x1="379.5" y1="385" x2="379.5" y2="854" stroke="#dadada"/>
<line x1="468.5" y1="353" x2="468.5" y2="854" stroke="#dadada"/>
<line x1="529.5" y1="353" x2="529.5" y2="854" stroke="#dadada"/>
<line x1="622.5" y1="353" x2="622.5" y2="854" stroke="#dadada"/>
<line x1="727.5" y1="353" x2="727.5" y2="854" stroke="#dadada"/>
<line x1="796.5" y1="353" x2="796.5" y2="854" stroke="#dadada"/>
<line x1="291" y1="385.5" x2="800" y2="385.5" stroke="#dadada"/>
<line x1="291" y1="404.5" x2="800" y2="404.5" stroke="#dadada"/>
<line x1="291" y1="422.5" x2="800" y2="422.5" stroke="#dadada"/>
<line x1="291" y1="440.5" x2="800" y2="440.5" stroke="#dadada"/>
<line x1="291" y1="459.5" x2="800" y2="459.5" stroke="#dadada"/>
<line x1="291" y1="477.5" x2="800" y2="477.5" stroke="#dadada"/>
<line x1="291" y1="495.5" x2="800" y2="495.5" stroke="#dadada"/>
<line x1="291" y1="514.5" x2="800" y2="514.5" stroke="#dadada"/>
<line x1="291" y1="532.5" x2="800" y2="532.5" stroke="#dadada"/>
<line x1="291" y1="550.5" x2="800" y2="550.5" stroke="#dadada"/>
<line x1="291" y1="569.5" x2="800" y2="569.5" stroke="#dadada"/>
<line x1="291" y1="587.5" x2="800" y2="587.5" stroke="#dadada"/>
<line x1="291" y1="605.5" x2="800" y2="605.5" stroke="#dadada"/>
<line x1="291" y1="624.5" x2="800" y2="624.5" stroke="#dadada"/>
<line x1="291" y1="642.5" x2="800" y2="642.5" stroke="#dadada"/>
<line x1="291" y1="660.5" x2="800" y2="660.5" stroke="#dadada"/>
<line x1="291" y1="679.5" x2="800" y2="679.5" stroke="#dadada"/>
<line x1="291" y1="697.5" x2="800" y2="697.5" stroke="#dadada"/>
<line x1="291" y1="715.5" x2="800" y2="715.5" stroke="#dadada"/>
<line x1="291" y1="734.5" x2="800" y2="734.5" stroke="#dadada"/>
<line x1="291" y1="752.5" x2="800" y2="752.5" stroke="#dadada"/>
<line x1="291" y1="770.5" x2="800" y2="770.5" stroke="#dadada"/>
<line x1="291" y1="789.5" x2="800" y2="789.5" stroke="#dadada"/>
<line x1="291" y1="807.5" x2="800" y2="807.5" stroke="#dadada"/>
<line x1="291" y1="825.5" x2="800" y2="825.5" stroke="#dadada"/>
<line x1="291" y1="844.5" x2="800" y2="844.5" stroke="#dadada"/>
<line x1="291" y1="862.5" x2="800" y2="862.5" stroke="#dadada"/>
<rect x="530" y="386" width="197" height="18" fill="#bf8f00"/>
<rect x="530" y="405" width="197" height="17" fill="#fff2cc"/>
<line x1="379.5" y1="336" x2="379.5" y2="353" stroke="#bdbdbd"/>
<line x1="468.5" y1="336" x2="468.5" y2="353" stroke="#bdbdbd"/>
<line x1="529.5" y1="336" x2="529.5" y2="353" stroke="#bdbdbd"/>
<line x1="622.5" y1="336" x2="622.5" y2="353" stroke="#bdbdbd"/>
<line x1="727.5" y1="336" x2="727.5" y2="353" stroke="#bdbdbd"/>
<line x1="796.5" y1="336" x2="796.5" y2="353" stroke="#bdbdbd"/>
<line x1="268" y1="385.5" x2="291" y2="385.5" stroke="#c4c4c4"/>
<line x1="268" y1="404.5" x2="291" y2="404.5" stroke="#c4c4c4"/>
<line x1="268" y1="422.5" x2="291" y2="422.5" stroke="#c4c4c4"/>
<line x1="268" y1="440.5" x2="291" y2="440.5" stroke="#c4c4c4"/>
<line x1="268" y1="459.5" x2="291" y2="459.5" stroke="#c4c4c4"/>
<line x1="268" y1="477.5" x2="291" y2="477.5" stroke="#c4c4c4"/>
<line x1="268" y1="495.5" x2="291" y2="495.5" stroke="#c4c4c4"/>
<line x1="268" y1="514.5" x2="291" y2="514.5" stroke="#c4c4c4"/>
<line x1="268" y1="532.5" x2="291" y2="532.5" stroke="#c4c4c4"/>
<line x1="268" y1="550.5" x2="291" y2="550.5" stroke="#c4c4c4"/>
<line x1="268" y1="569.5" x2="291" y2="569.5" stroke="#c4c4c4"/>
<line x1="268" y1="587.5" x2="291" y2="587.5" stroke="#c4c4c4"/>
<line x1="268" y1="605.5" x2="291" y2="605.5" stroke="#c4c4c4"/>
<line x1="268" y1="624.5" x2="291" y2="624.5" stroke="#c4c4c4"/>
<line x1="268" y1="642.5" x2="291" y2="642.5" stroke="#c4c4c4"/>
<line x1="268" y1="660.5" x2="291" y2="660.5" stroke="#c4c4c4"/>
<line x1="268" y1="679.5" x2="291" y2="679.5" stroke="#c4c4c4"/>
<line x1="268" y1="697.5" x2="291" y2="697.5" stroke="#c4c4c4"/>
<line x1="268" y1="715.5" x2="291" y2="715.5" stroke="#c4c4c4"/>
<line x1="268" y1="734.5" x2="291" y2="734.5" stroke="#c4c4c4"/>
<line x1="268" y1="752.5" x2="291" y2="752.5" stroke="#c4c4c4"/>
<line x1="268" y1="770.5" x2="291" y2="770.5" stroke="#c4c4c4"/>
<line x1="268" y1="789.5" x2="291" y2="789.5" stroke="#c4c4c4"/>
<line x1="268" y1="807.5" x2="291" y2="807.5" stroke="#c4c4c4"/>
<line x1="268" y1="825.5" x2="291" y2="825.5" stroke="#c4c4c4"/>
<line x1="268" y1="844.5" x2="291" y2="844.5" stroke="#c4c4c4"/>
<line x1="268" y1="862.5" x2="291" y2="862.5" stroke="#c4c4c4"/>
<line x1="268" y1="353.5" x2="800" y2="353.5" stroke="#a6a6a6"/>
<line x1="291.5" y1="336" x2="291.5" y2="854" stroke="#ababab"/>
<line x1="267.5" y1="336" x2="267.5" y2="854" stroke="#c0c0c0"/>
<rect x="291.5" y="404.5" width="88" height="18" fill="none" stroke="#222" stroke-width="1"/>
<rect x="291" y="353" width="178" height="33" fill="none" stroke="#217346" stroke-width="2"/>
<rect x="465.5" y="382.5" width="6" height="6" fill="#217346" stroke="#fff" stroke-width="1"/>
</svg>
<div class="t" style="left:291px;width:88px;text-align:center;top:339px;font-size:11px;color:#444">A</div>
<div class="t" style="left:379px;width:89px;text-align:center;top:339px;font-size:11px;color:#444">B</div>
<div class="t" style="left:468px;width:61px;text-align:center;top:339px;font-size:11px;color:#444">C</div>
<div class="t" style="left:529px;width:93px;text-align:center;top:339px;font-size:11px;color:#444">D</div>
<div class="t" style="left:622px;width:105px;text-align:center;top:339px;font-size:11px;color:#444">E</div>
<div class="t" style="left:727px;width:69px;text-align:center;top:339px;font-size:11px;color:#444">F</div>
<div class="t" style="left:268px;width:23px;text-align:center;top:372.2px;font-size:11px;color:#444">1</div>
<div class="t" style="left:268px;width:23px;text-align:center;top:391.2px;font-size:11px;color:#444">2</div>
<div class="t" style="left:268px;width:23px;text-align:center;top:409.2px;font-size:11px;color:#444">3</div>
<div class="t" style="left:268px;width:23px;text-align:center;top:427.2px;font-size:11px;color:#444">4</div>
<div class="t" style="left:268px;width:23px;text-align:center;top:446.2px;font-size:11px;color:#444">5</div>
<div class="t" style="left:268px;width:23px;text-align:center;top:464.2px;font-size:11px;color:#444">6</div>
<div class="t" style="left:268px;width:23px;text-align:center;top:482.2px;font-size:11px;color:#444">7</div>
<div class="t" style="left:268px;width:23px;text-align:center;top:501.2px;font-size:11px;color:#444">8</div>
<div class="t" style="left:268px;width:23px;text-align:center;top:519.2px;font-size:11px;color:#444">9</div>
<div class="t" style="left:268px;width:23px;text-align:center;top:537.2px;font-size:11px;color:#444">10</div>
<div class="t" style="left:268px;width:23px;text-align:center;top:556.2px;font-size:11px;color:#444">11</div>
<div class="t" style="left:268px;width:23px;text-align:center;top:574.2px;font-size:11px;color:#444">12</div>
<div class="t" style="left:268px;width:23px;text-align:center;top:592.2px;font-size:11px;color:#444">13</div>
<div class="t" style="left:268px;width:23px;text-align:center;top:611.2px;font-size:11px;color:#444">14</div>
<div class="t" style="left:268px;width:23px;text-align:center;top:629.2px;font-size:11px;color:#444">15</div>
<div class="t" style="left:268px;width:23px;text-align:center;top:647.2px;font-size:11px;color:#444">16</div>
<div class="t" style="left:268px;width:23px;text-align:center;top:666.2px;font-size:11px;color:#444">17</div>
<div class="t" style="left:268px;width:23px;text-align:center;top:684.2px;font-size:11px;color:#444">18</div>
<div class="t" style="left:268px;width:23px;text-align:center;top:702.2px;font-size:11px;color:#444">19</div>
<div class="t" style="left:268px;width:23px;text-align:center;top:721.2px;font-size:11px;color:#444">20</div>
<div class="t" style="left:268px;width:23px;text-align:center;top:739.2px;font-size:11px;color:#444">21</div>
<div class="t" style="left:268px;width:23px;text-align:center;top:757.2px;font-size:11px;color:#444">22</div>
<div class="t" style="left:268px;width:23px;text-align:center;top:776.2px;font-size:11px;color:#444">23</div>
<div class="t" style="left:268px;width:23px;text-align:center;top:794.2px;font-size:11px;color:#444">24</div>
<div class="t" style="left:268px;width:23px;text-align:center;top:812.2px;font-size:11px;color:#444">25</div>
<div class="t" style="left:268px;width:23px;text-align:center;top:831.2px;font-size:11px;color:#444">26</div>
<div class="t" style="left:268px;width:23px;text-align:center;top:849.2px;font-size:11px;color:#444">27</div>
<div class="t" style="left:291px;width:177px;text-align:center;top:359.6px;font-size:16.7px;color:#2a4799;-webkit-text-stroke:0.85px #2a4799">&lt;SalesOffice&gt;</div>
<div class="t" style="left:293.5px;top:408.5px;font-size:11.1px;font-weight:bold;color:#000">&lt;CH304&gt;</div>
<div class="t" style="left:293.5px;top:445px;font-size:11.2px;color:#111">&lt;CH304_1&gt;</div>
<div class="t" style="left:529px;width:93px;text-align:center;top:390.5px;font-size:11px;font-weight:bold;color:#111">Sales</div>
<div class="t" style="left:622px;width:105px;text-align:center;top:390.5px;font-size:11.4px;font-weight:bold;color:#111">Country</div>
<div class="t" style="left:529px;width:93px;text-align:center;top:408px;font-size:11.4px;color:#222">&lt;Sales&gt;</div>
<div class="t" style="left:622px;width:105px;text-align:center;top:408px;font-size:12.4px;color:#222">&lt;Country&gt;</div>
<div class="a" style="left:268px;top:853px;width:532px;height:27px;background:#e6e6e6;border-top:1px solid #a8a8a8;border-bottom:1px solid #b0b0b0"></div>
<div class="a" style="left:360px;top:853px;width:169px;height:23px;background:#fff;border-right:1px solid #a8a8a8;border-bottom:2px solid #217346;border-left:1px solid #c8c8c8"></div>
<div class="t" style="left:371.7px;top:860px;font-size:11.6px;font-weight:bold;color:#217346">&lt;SalesOffice_Page&gt; office</div>
<svg class="a" style="left:268px;top:853px" width="532" height="28" viewBox="268 853 532 28">
 <path d="M296 862 v7 l-3.5 -3.5 z" fill="#bdbdbd"/>
 <path d="M319 862 v7 l3.5 -3.5 z" fill="#bdbdbd"/>
 <circle cx="565.5" cy="865.5" r="6.3" fill="none" stroke="#666" stroke-width="1.1"/>
 <path d="M562 865.5 h7 M565.5 862 v7" stroke="#666" stroke-width="1.2"/>
 <circle cx="603" cy="862" r="0.7" fill="#999"/><circle cx="603" cy="865.5" r="0.7" fill="#999"/><circle cx="603" cy="869" r="0.7" fill="#999"/>
 <rect x="618.5" y="859.5" width="190" height="13" fill="#fff" stroke="#a8a8a8"/>
 <line x1="631.5" y1="860" x2="631.5" y2="872" stroke="#c8c8c8"/>
 <path d="M627 862.5 v7 l-3.5 -3.5 z" fill="#444"/>
</svg>
</body></html>
